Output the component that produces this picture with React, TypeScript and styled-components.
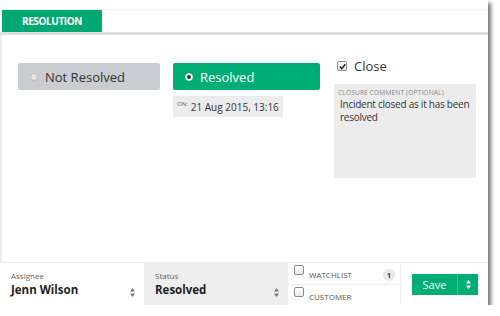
import React from "react";
import styled, { createGlobalStyle } from "styled-components";

const Global = createGlobalStyle`
  html, body { margin: 0; padding: 0; background: #fff; }
  body { font-family: "Open Sans", "Liberation Sans", sans-serif; color: #333; }
  * { box-sizing: border-box; }
`;

const Window = styled.div`
  width: 488px;
  height: 305px;
  background: #fff;
  box-shadow: 3px 3px 4px rgba(0, 0, 0, 0.55);
  display: flex;
  flex-direction: column;
`;

const TopGap = styled.div`
  height: 10px;
  border-bottom: 1px solid #f0f0f0;
`;

const TabBar = styled.div`
  display: flex;
  height: 25px;
  border-bottom: 3px solid #dedede;
  padding-left: 2px;
`;

const Tab = styled.div`
  width: 100px;
  height: 22px;
  background: #00a972;
  color: #fff;
  font-size: 10px;
  font-weight: 700;
  display: flex;
  align-items: center;
  justify-content: center;
  letter-spacing: -0.4px;
`;

const Body = styled.div`
  flex: 1;
  border-left: 2px solid #ededed;
  display: flex;
  padding: 28px 0 0 16px;
  gap: 13px;
`;

const Column = styled.div`
  display: flex;
  flex-direction: column;
  gap: 6px;
`;

const StateButton = styled.div<{ $active?: boolean }>`
  width: ${(p) => (p.$active ? 147 : 142)}px;
  height: 27px;
  border-radius: 2px;
  background: ${(p) => (p.$active ? "#00ad74" : "#c9ccd1")};
  color: ${(p) => (p.$active ? "#fff" : "#333")};
  font-size: 13px;
  display: flex;
  align-items: center;
  padding-left: 12px;
  gap: 7px;
`;

const Radio = styled.span<{ $checked?: boolean }>`
  width: 8px;
  height: 8px;
  border-radius: 50%;
  background: ${(p) => (p.$checked ? "#fff" : "#e6e6e6")};
  border: 1px solid ${(p) => (p.$checked ? "#ddd" : "#bbb")};
  display: inline-flex;
  align-items: center;
  justify-content: center;
  &::after {
    content: "";
    width: 4px;
    height: 4px;
    border-radius: 50%;
    background: ${(p) => (p.$checked ? "#333" : "transparent")};
  }
`;

const DateBox = styled.div`
  width: 110px;
  height: 21px;
  background: #ececec;
  display: flex;
  align-items: center;
  padding-left: 4px;
  font-size: 10px;
  color: #333;
  gap: 3px;
`;

const Sup = styled.span`
  font-size: 6px;
  color: #666;
  align-self: flex-start;
  margin-top: 4px;
`;

const CloseColumn = styled.div`
  display: flex;
  flex-direction: column;
  margin-top: -5px;
  margin-left: 1px;
`;

const CloseRow = styled.label`
  display: flex;
  align-items: center;
  gap: 7px;
  font-size: 13px;
  padding-left: 3px;
  height: 16px;
`;

const CheckBox = styled.span<{ $checked?: boolean }>`
  width: 10px;
  height: 10px;
  border: 1px solid #8a8a8a;
  border-radius: 2px;
  background: linear-gradient(#fff, #e8e8e8);
  display: inline-flex;
  align-items: center;
  justify-content: center;
  flex-shrink: 0;
`;

const CommentBox = styled.div`
  margin-top: 10px;
  width: 142px;
  height: 94px;
  background: #ececec;
  padding: 5px 4px 0 4px;
`;

const CommentLabel = styled.div`
  font-size: 6.6px;
  color: #888;
  letter-spacing: 0.15px;
  line-height: 8px;
  margin-bottom: 1px;
`;

const CommentText = styled.div`
  font-size: 10px;
  line-height: 13px;
  color: #333;
  padding-left: 2px;
  letter-spacing: -0.25px;
`;

const BottomBar = styled.div`
  height: 43px;
  border-top: 1px solid #eee;
  display: flex;
`;

const Field = styled.div<{ $grey?: boolean }>`
  width: 144px;
  background: ${(p) => (p.$grey ? "#eeeeee" : "#fff")};
  padding: 8px 8px 0 11px;
  position: relative;
`;

const FieldLabel = styled.div`
  font-size: 8px;
  color: #666;
  line-height: 10px;
`;

const FieldValue = styled.div`
  font-size: 11.5px;
  font-weight: 700;
  color: #222;
  line-height: 16px;
  margin-top: 1px;
`;

const Spinner = styled.svg`
  position: absolute;
  right: 9px;
  bottom: 8px;
`;

const Flags = styled.div`
  width: 113px;
  border-right: 1px solid #eee;
  display: flex;
  flex-direction: column;
`;

const FlagRow = styled.div<{ $last?: boolean }>`
  flex: 1;
  display: flex;
  align-items: flex-start;
  padding: 2px 6px 0;
  gap: 5px;
  font-size: 8px;
  color: #555;
  border-bottom: ${(p) => (p.$last ? "none" : "1px solid #eee")};
`;

const FlagText = styled.span`
  padding-top: 4px;
`;

const Badge = styled.span`
  margin-left: auto;
  margin-top: 4px;
  width: 12px;
  height: 12px;
  border-radius: 50%;
  background: #e8e8e8;
  font-size: 7px;
  font-weight: 700;
  display: flex;
  align-items: center;
  justify-content: center;
  color: #333;
  margin-right: -1px;
`;

const SaveWrap = styled.div`
  flex: 1;
  display: flex;
  align-items: center;
  padding-left: 11px;
`;

const SaveButton = styled.div`
  display: flex;
  height: 21px;
  background: #00ad74;
  color: #fff;
`;

const SaveLabel = styled.div`
  width: 46px;
  font-size: 11px;
  display: flex;
  align-items: center;
  justify-content: center;
  border-right: 1px solid #3cc393;
`;

const SaveArrow = styled.div`
  width: 20px;
  display: flex;
  align-items: center;
  justify-content: center;
`;

const Arrows = ({ color }: { color: string }) => (
  <svg width="5" height="9" viewBox="0 0 5 9">
    <path d="M2.5 0 L5 3.5 H0 Z" fill={color} />
    <path d="M2.5 9 L5 5.5 H0 Z" fill={color} />
  </svg>
);

export default function App() {
  return (
    <>
      <Global />
      <Window>
        <TopGap />
        <TabBar>
          <Tab>RESOLUTION</Tab>
        </TabBar>
        <Body>
          <Column>
            <StateButton>
              <Radio />
              Not Resolved
            </StateButton>
          </Column>
          <Column>
            <StateButton $active>
              <Radio $checked />
              Resolved
            </StateButton>
            <DateBox>
              <Sup>ON:</Sup>
              21 Aug 2015, 13:16
            </DateBox>
          </Column>
          <CloseColumn>
            <CloseRow>
              <CheckBox $checked>
                <svg width="7" height="7" viewBox="0 0 7 7">
                  <path d="M0.8 3.6 L2.8 5.6 L6.2 1.2" stroke="#222" strokeWidth="1.4" fill="none" />
                </svg>
              </CheckBox>
              Close
            </CloseRow>
            <CommentBox>
              <CommentLabel>CLOSURE COMMENT (OPTIONAL)</CommentLabel>
              <CommentText>Incident closed as it has been resolved</CommentText>
            </CommentBox>
          </CloseColumn>
        </Body>
        <BottomBar>
          <Field>
            <FieldLabel>Assignee</FieldLabel>
            <FieldValue>Jenn Wilson</FieldValue>
            <Spinner width="5" height="9" viewBox="0 0 5 9">
              <path d="M2.5 0 L5 3.5 H0 Z" fill="#777" />
              <path d="M2.5 9 L5 5.5 H0 Z" fill="#777" />
            </Spinner>
          </Field>
          <Field $grey>
            <FieldLabel>Status</FieldLabel>
            <FieldValue>Resolved</FieldValue>
            <Spinner width="5" height="9" viewBox="0 0 5 9">
              <path d="M2.5 0 L5 3.5 H0 Z" fill="#777" />
              <path d="M2.5 9 L5 5.5 H0 Z" fill="#777" />
            </Spinner>
          </Field>
          <Flags>
            <FlagRow>
              <CheckBox />
              <FlagText>WATCHLIST</FlagText>
              <Badge>1</Badge>
            </FlagRow>
            <FlagRow $last>
              <CheckBox />
              <FlagText>CUSTOMER</FlagText>
            </FlagRow>
          </Flags>
          <SaveWrap>
            <SaveButton>
              <SaveLabel>Save</SaveLabel>
              <SaveArrow>
                <Arrows color="#fff" />
              </SaveArrow>
            </SaveButton>
          </SaveWrap>
        </BottomBar>
      </Window>
    </>
  );
}
